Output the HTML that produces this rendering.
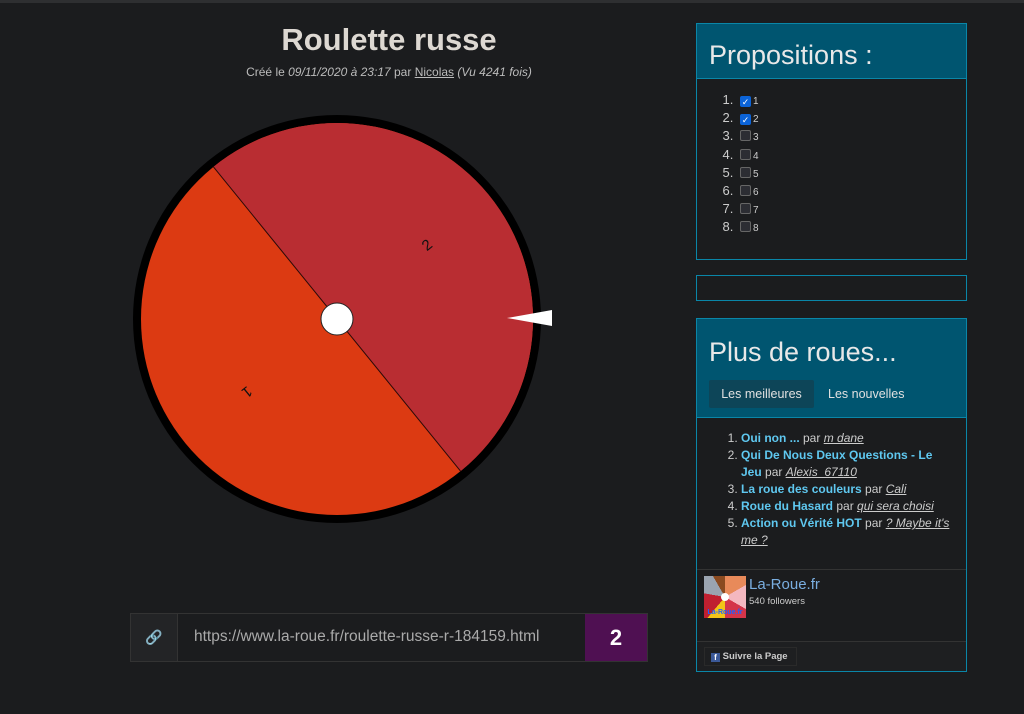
<!DOCTYPE html>
<html><head><meta charset="utf-8">
<style>
*{margin:0;padding:0;box-sizing:border-box}
body{width:1024px;height:714px;background:#1b1c1e;font-family:"Liberation Sans",sans-serif;color:#ccc;position:relative;overflow:hidden}
.abs{position:absolute}
.panel{position:absolute;left:696px;width:271px;border:1px solid #0a86a8;background:#1b1c1e;overflow:hidden}
.hd{background:#005570;border-bottom:1px solid #0a86a8;color:#e8e8e8;font-weight:300}
ol{color:#ccc}
.cb{display:inline-block;width:11px;height:11px;border:1px solid #666;border-radius:2px;background:#2c2d33;vertical-align:-1px;margin-left:3px}
.cb.on{background:#0b63d8;border-color:#0b63d8;color:#fff;font-size:9px;line-height:10px;text-align:center}
.prop li{font-size:13px;height:18.2px}
.prop small{font-size:10px;margin-left:2px}
.lst li{font-size:12px;line-height:17px}
.lst b{color:#5fc8f0}
.lst i{text-decoration:underline;color:#ccc}
</style></head><body>
<div class="abs" style="left:0;top:0;width:1024px;height:3px;background:#2e2f31"></div>
<div class="abs" style="left:130px;top:22px;width:518px;text-align:center;font-size:31px;font-weight:bold;color:#ddd8d2">Roulette russe</div>
<div class="abs" style="left:130px;top:65px;width:518px;text-align:center;font-size:12px;color:#bbb">Créé le <i>09/11/2020 à 23:17</i> par <u>Nicolas</u> <i>(Vu 4241 fois)</i></div>

<svg class="abs" style="left:0;top:0" width="680" height="560">
<defs><clipPath id="c"><circle cx="337" cy="319" r="196"/></clipPath></defs>
<circle cx="337" cy="319" r="204" fill="#000"/>
<circle cx="337" cy="319" r="196" fill="#dc3a12"/>
<g clip-path="url(#c)">
<polygon points="156,96 337,319 518,542 800,300 500,-100" fill="#b92d32"/>
</g>
<line x1="213.5" y1="166.9" x2="460.5" y2="471.1" stroke="#2a0a08" stroke-width="1"/>
<text x="427" y="250" font-size="15" fill="#111" transform="rotate(-39 427 245)" text-anchor="middle" font-family="Liberation Sans">2</text>
<text x="247" y="397" font-size="15" fill="#111" transform="rotate(141 247 392)" text-anchor="middle" font-family="Liberation Sans">1</text>
<circle cx="337" cy="319" r="16" fill="#fff" stroke="#222" stroke-width="1"/>
<polygon points="507,318 552,310 552,326" fill="#fff"/>
</svg>

<div class="abs" style="left:130px;top:613px;width:518px;height:49px;border:1px solid #333;background:#1b1c1e"></div>
<div class="abs" style="left:131px;top:614px;width:47px;height:47px;background:#232426;border-right:1px solid #333;color:#aaa;font-size:14px;text-align:center;line-height:47px">&#128279;</div>
<div class="abs" style="left:194px;top:628px;font-size:15.5px;color:#aaa">https://www.la-roue.fr/roulette-russe-r-184159.html</div>
<div class="abs" style="left:585px;top:614px;width:62px;height:47px;background:#4f1052;color:#fff;font-weight:bold;font-size:22px;text-align:center;line-height:47px">2</div>

<div class="panel prop" style="top:23px;height:237px">
<div class="hd" style="height:55px;font-size:27px;padding:16px 0 0 12px">Propositions :</div>
<ol style="padding:13px 0 0 40px">
<li><span class="cb on">✓</span><small>1</small></li>
<li><span class="cb on">✓</span><small>2</small></li>
<li><span class="cb"></span><small>3</small></li>
<li><span class="cb"></span><small>4</small></li>
<li><span class="cb"></span><small>5</small></li>
<li><span class="cb"></span><small>6</small></li>
<li><span class="cb"></span><small>7</small></li>
<li><span class="cb"></span><small>8</small></li>
</ol>
</div>
<div class="panel" style="top:275px;height:26px"></div>

<div class="panel" style="top:318px;height:354px">
<div class="hd" style="height:99px;padding:18px 0 0 12px;position:relative">
<div style="font-size:27px">Plus de roues...</div>
<div style="position:absolute;left:12px;top:61px;width:105px;height:28px;background:#0d4558;border-radius:2px;font-size:12.5px;font-weight:normal;text-align:center;line-height:28px;color:#e0e0e0">Les meilleures</div>
<div style="position:absolute;left:131px;top:61px;font-size:12.5px;line-height:28px;color:#e0e0e0">Les nouvelles</div>
</div>
<ol class="lst" style="padding:12px 16px 0 44px;height:151px;overflow:hidden">
<li><b>Oui non ...</b> par <i>m dane</i></li>
<li><b>Qui De Nous Deux Questions - Le Jeu</b> par <i>Alexis_67110</i></li>
<li><b>La roue des couleurs</b> par <i>Cali</i></li>
<li><b>Roue du Hasard</b> par <i>qui sera choisi</i></li>
<li><b>Action ou Vérité HOT</b> par <i>? Maybe it's me ?</i></li>
</ol>
<div style="border-top:1px solid #333;height:72px;position:relative">
<div style="position:absolute;left:7px;top:6px;width:42px;height:42px;background:conic-gradient(#e88a5a 0 60deg,#f4b8c0 60deg 120deg,#d4354a 120deg 180deg,#f2c418 180deg 220deg,#c02030 220deg 280deg,#9aa4b0 280deg 330deg,#8a4a20 330deg)"><div style="position:absolute;left:17px;top:17px;width:8px;height:8px;background:#fff;border-radius:50%"></div><div style="position:absolute;left:0;bottom:2px;width:42px;font-size:7px;color:#2060ff;font-weight:bold;text-align:center">La-Roue.fr</div></div>
<div style="position:absolute;left:52px;top:6px;font-size:15px;color:#7aaee0">La-Roue.fr</div>
<div style="position:absolute;left:52px;top:26px;font-size:9.5px;color:#ccc">540 followers</div>
</div>
<div style="border-top:1px solid #333;height:31px;background:#1e1f21;position:relative">
<div style="position:absolute;left:7px;top:5px;width:93px;height:19px;border:1px solid #2a2a2a;font-size:9.5px;font-weight:bold;color:#ccc;line-height:17px;padding-left:6px"><span style="display:inline-block;width:9px;height:9px;background:#3b5998;color:#fff;font-size:8px;line-height:9px;text-align:center;vertical-align:-1px">f</span> Suivre la Page</div>
</div>
</div>
</body></html>
